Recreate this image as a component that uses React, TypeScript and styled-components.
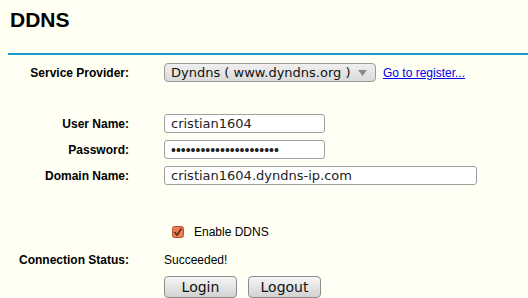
import React from "react";
import styled, { createGlobalStyle } from "styled-components";

const GlobalStyle = createGlobalStyle`
  html, body {
    margin: 0;
    padding: 0;
    background: #fffff4;
  }
  body {
    font-family: "Liberation Sans", Arial, sans-serif;
    color: #000;
  }
`;

const Page = styled.div`
  width: 528px;
  height: 298px;
  overflow: hidden;
  background: #fffff4;
`;

const Header = styled.div`
  margin-left: 8px;
  padding: 8px 0 0 2px;
  height: 55px;
  border-bottom: 2px solid #1a9bcb;
  box-sizing: border-box;
`;

const Title = styled.h1`
  margin: 0;
  font-family: "Liberation Sans", Arial, sans-serif;
  font-size: 21px;
  font-weight: bold;
  line-height: 24px;
`;

const Form = styled.div`
  display: flex;
  flex-direction: column;
`;

const Row = styled.div<{ $top: number; $height: number }>`
  display: grid;
  grid-template-columns: 129px 1fr;
  column-gap: 35px;
  align-items: center;
  margin-top: ${(p) => p.$top}px;
  height: ${(p) => p.$height}px;
`;

const Label = styled.div`
  text-align: right;
  font-size: 12px;
  font-weight: bold;
  white-space: nowrap;
`;

const Field = styled.div`
  display: flex;
  align-items: center;
  gap: 7px;
  height: 100%;
`;

const SelectBox = styled.div`
  width: 212px;
  height: 19px;
  box-sizing: border-box;
  border: 1px solid #9a9a9a;
  border-radius: 4px;
  background: linear-gradient(#f0f0f0, #dadada);
  display: flex;
  align-items: center;
  justify-content: space-between;
  padding: 0 6px;
  overflow: hidden;
  font-family: "DejaVu Sans", sans-serif;
  font-size: 13px;
  line-height: 17px;
  color: #111;
`;

const Arrow = styled.svg`
  flex: none;
  margin-right: 2px;
`;

const Link = styled.a`
  color: #0000ee;
  font-size: 12px;
  text-decoration: underline;
  cursor: pointer;
`;

const TextInput = styled.input<{ $width: number }>`
  width: ${(p) => p.$width}px;
  height: 19px;
  box-sizing: border-box;
  border: 1px solid #a0a0a0;
  border-radius: 3px;
  background: #fff;
  padding: 0 6px;
  font-family: "DejaVu Sans", sans-serif;
  font-size: 13px;
  color: #222;
  outline: none;
`;

const PasswordInput = styled(TextInput)`
  font-family: "Liberation Sans", Arial, sans-serif;
  font-size: 14px;
`;

const CheckRow = styled.label`
  display: flex;
  align-items: center;
  gap: 10px;
  margin-left: 8px;
  font-size: 12px;
`;

const Status = styled.div`
  font-size: 12px;
`;

const Buttons = styled.div`
  display: flex;
  gap: 11px;
`;

const Button = styled.button`
  width: 73px;
  height: 22px;
  box-sizing: border-box;
  border: 1px solid #8c8c8c;
  border-radius: 4px;
  background: linear-gradient(#f6f6f6, #d2d2d2);
  font-family: "DejaVu Sans", sans-serif;
  font-size: 14px;
  color: #111;
  padding: 0;
  line-height: 20px;
`;

const CheckIcon = () => (
  <svg width="12" height="12" viewBox="0 0 12 12">
    <rect x="0.5" y="0.5" width="11" height="11" rx="2" fill="#ec7a52" stroke="#b4532f" />
    <path d="M2.5 6 L5 9 L9.5 2.5" fill="none" stroke="#5a2c1c" strokeWidth="1.6" />
  </svg>
);

export default function App() {
  return (
    <Page>
      <GlobalStyle />
      <Header>
        <Title>DDNS</Title>
      </Header>
      <Form>
        <Row $top={8} $height={19}>
          <Label>Service Provider:</Label>
          <Field>
            <SelectBox>
              <span>Dyndns ( www.dyndns.org )</span>
              <Arrow width="9" height="6" viewBox="0 0 9 6">
                <path d="M0 0 H9 L4.5 6 Z" fill="#8a8a8a" />
              </Arrow>
            </SelectBox>
            <Link>Go to register...</Link>
          </Field>
        </Row>
        <Row $top={32} $height={19}>
          <Label>User Name:</Label>
          <Field>
            <TextInput $width={161} defaultValue="cristian1604" />
          </Field>
        </Row>
        <Row $top={7} $height={19}>
          <Label>Password:</Label>
          <Field>
            <PasswordInput $width={161} type="password" defaultValue="abcdefghijklmnopqrstuv" />
          </Field>
        </Row>
        <Row $top={7} $height={19}>
          <Label>Domain Name:</Label>
          <Field>
            <TextInput $width={313} defaultValue="cristian1604.dyndns-ip.com" />
          </Field>
        </Row>
        <Row $top={39} $height={15}>
          <span />
          <CheckRow>
            <CheckIcon />
            Enable DDNS
          </CheckRow>
        </Row>
        <Row $top={13} $height={16}>
          <Label>Connection Status:</Label>
          <Status>Succeeded!</Status>
        </Row>
        <Row $top={8} $height={22}>
          <span />
          <Buttons>
            <Button>Login</Button>
            <Button>Logout</Button>
          </Buttons>
        </Row>
      </Form>
    </Page>
  );
}
